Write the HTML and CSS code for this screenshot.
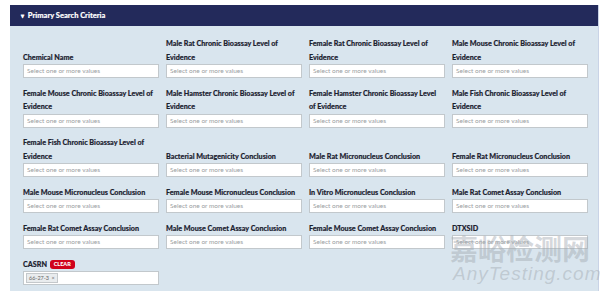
FILE: index.html
```html
<!DOCTYPE html>
<html lang="en">
<head>
  <meta charset="UTF-8" />
  <meta name="viewport" content="width=device-width, initial-scale=1.0"/>
  <title>Primary Search Criteria</title>
  <link rel="stylesheet" href="styles.css">
</head>
<body>
  <div class="panel">
    <div class="panel-head"><span class="caret">&#9662;</span> Primary Search Criteria</div>
    <div class="panel-body">
      <div class="criteria">
        <div class="field"><label>Chemical Name</label><div class="select">Select one or more values</div></div>
        <div class="field"><label>Male Rat Chronic Bioassay Level of Evidence</label><div class="select">Select one or more values</div></div>
        <div class="field"><label>Female Rat Chronic Bioassay Level of Evidence</label><div class="select">Select one or more values</div></div>
        <div class="field"><label>Male Mouse Chronic Bioassay Level of Evidence</label><div class="select">Select one or more values</div></div>

        <div class="field"><label>Female Mouse Chronic Bioassay Level of Evidence</label><div class="select">Select one or more values</div></div>
        <div class="field"><label>Male Hamster Chronic Bioassay Level of Evidence</label><div class="select">Select one or more values</div></div>
        <div class="field"><label>Female Hamster Chronic Bioassay Level of Evidence</label><div class="select">Select one or more values</div></div>
        <div class="field"><label>Male Fish Chronic Bioassay Level of Evidence</label><div class="select">Select one or more values</div></div>

        <div class="field"><label>Female Fish Chronic Bioassay Level of Evidence</label><div class="select">Select one or more values</div></div>
        <div class="field"><label>Bacterial Mutagenicity Conclusion</label><div class="select">Select one or more values</div></div>
        <div class="field"><label>Male Rat Micronucleus Conclusion</label><div class="select">Select one or more values</div></div>
        <div class="field"><label>Female Rat Micronucleus Conclusion</label><div class="select">Select one or more values</div></div>

        <div class="field"><label>Male Mouse Micronucleus Conclusion</label><div class="select">Select one or more values</div></div>
        <div class="field"><label>Female Mouse Micronucleus Conclusion</label><div class="select">Select one or more values</div></div>
        <div class="field"><label>In Vitro Micronucleus Conclusion</label><div class="select">Select one or more values</div></div>
        <div class="field"><label>Male Rat Comet Assay Conclusion</label><div class="select">Select one or more values</div></div>

        <div class="field"><label>Female Rat Comet Assay Conclusion</label><div class="select">Select one or more values</div></div>
        <div class="field"><label>Male Mouse Comet Assay Conclusion</label><div class="select">Select one or more values</div></div>
        <div class="field"><label>Female Mouse Comet Assay Conclusion</label><div class="select">Select one or more values</div></div>
        <div class="field"><label>DTXSID</label><div class="select">Select one or more values</div></div>

        <div class="field"><label>CASRN <span class="clear">CLEAR</span></label><div class="select filled"><span class="chip">66-27-3 <b>&times;</b></span></div></div>
      </div>
      <div class="watermark">
        <div class="wm-cn">嘉峪检测网</div>
        <div class="wm-en">AnyTesting.com</div>
      </div>
    </div>
  </div>
</body>
</html>
```

FILE: styles.css
```css
body {
  margin: 0;
  background: #fff;
  font-family: Lato, "Liberation Sans", sans-serif;
  overflow: hidden;
}
.panel {
  margin: 5px 1px 0 10px;
  border-right: 1px solid #c9d3e6;
}
.panel-head {
  background: #232a5b;
  color: #fff;
  font-size: 7.5px;
  font-weight: 900;
  -webkit-text-stroke: 0.15px #fff;
  height: 21px;
  line-height: 21px;
  padding-left: 11px;
}
.caret {
  font-size: 6px;
  margin-right: 2px;
}
.panel-body {
  position: relative;
  background: #d9e5ee;
  padding: 11px 10px 8px 13px;
}
.criteria {
  display: grid;
  grid-template-columns: repeat(4, 136px);
  column-gap: 7px;
  row-gap: 8.5px;
  align-items: end;
}
.field label {
  display: block;
  font-size: 7.2px;
  font-weight: 900;
  -webkit-text-stroke: 0.15px #1c2230;
  color: #1c2230;
  line-height: 13.5px;
  padding-right: 6px;
}
.select {
  background: #fff;
  border: 1px solid #c2c8cc;
  height: 14px;
  box-sizing: border-box;
  font-size: 6.5px;
  line-height: 12px;
  color: #9a9ea2;
  padding-left: 3px;
}
.clear {
  display: inline-block;
  background: #d0021b;
  color: #fff;
  -webkit-text-stroke: 0;
  font-size: 5.5px;
  line-height: 9px;
  padding: 0 4px;
  border-radius: 3px;
  margin-left: 1px;
  vertical-align: 1px;
}
.filled {
  padding: 1px 2px;
}
.chip {
  display: inline-block;
  background: #e9ecee;
  border: 1px solid #c4c8cb;
  color: #666;
  font-size: 5.5px;
  line-height: 8px;
  padding: 0 2px;
  vertical-align: top;
}
.chip b {
  font-weight: normal;
  margin-left: 1px;
}
.watermark {
  position: absolute;
  left: 440px;
  top: 207px;
  color: rgba(160, 168, 176, 0.45);
  pointer-events: none;
}
.wm-cn {
  font-family: "Noto Sans CJK SC", sans-serif;
  font-weight: bold;
  font-size: 28px;
  line-height: 30px;
}
.wm-en {
  font-family: "Liberation Sans", sans-serif;
  font-style: italic;
  font-size: 19px;
  line-height: 22px;
  letter-spacing: 1px;
  padding-left: 3px;
}
```
